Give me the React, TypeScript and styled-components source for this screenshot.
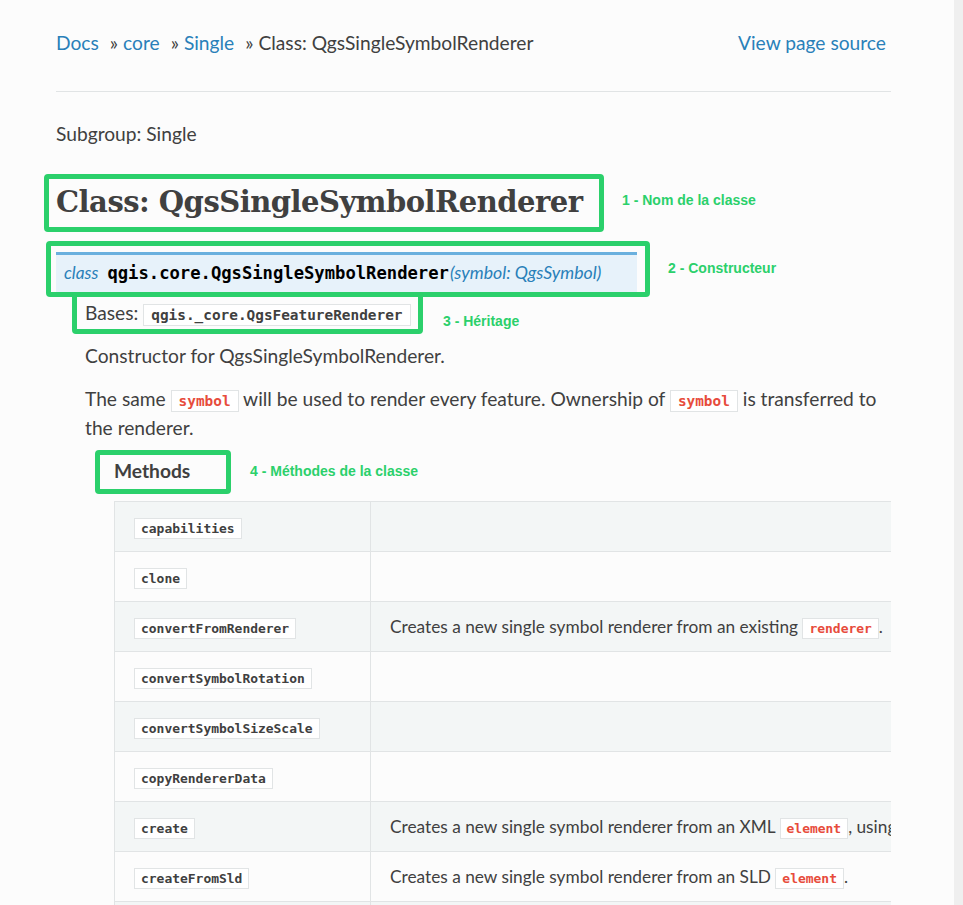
import React from "react";
import styled, { createGlobalStyle } from "styled-components";

const GlobalStyle = createGlobalStyle`
  html, body {
    margin: 0;
    padding: 0;
    background: #fcfcfc;
    overflow: hidden;
  }
  body {
    font-family: Lato, "Noto Sans", sans-serif;
    color: #404040;
  }
`;

const GREEN = "#2bd06b";
const BLUE = "#2980b9";

const Page = styled.div`
  position: relative;
  display: flex;
  width: 963px;
  height: 905px;
  overflow: hidden;
  background: #fcfcfc;
`;

const Main = styled.main`
  width: 835px;
  padding: 0 63px 0 56px;
  flex: none;
`;

const Gutter = styled.div`
  flex: 1;
  background: #efefef;
`;

const Breadcrumbs = styled.nav`
  margin-top: 28px;
  display: flex;
  justify-content: space-between;
  align-items: baseline;
  font-size: 19.2px;
  line-height: 29px;
  padding-right: 5px;
`;

const Trail = styled.div`
  display: flex;
  align-items: baseline;
`;

const CrumbLink = styled.a`
  color: ${BLUE};
  text-decoration: none;
`;

const Sep = styled.span`
  margin: 0 5px 0 11px;
  color: #404040;
`;

const Current = styled.span`
  color: #404040;
`;

const Rule = styled.hr`
  margin: 34px 0 0 0;
  border: none;
  border-top: 1px solid #e1e4e5;
  height: 0;
`;

const Para = styled.p<{ $top?: number }>`
  margin: ${(p) => p.$top ?? 14}px 0 0 0;
  font-size: 19.2px;
  line-height: 29px;
  color: #404040;
`;

const Title = styled.h1`
  margin: 36px 0 0 0;
  font-family: "DejaVu Serif", "Liberation Serif", serif;
  font-weight: 700;
  font-size: 29px;
  line-height: 36px;
  letter-spacing: -0.5px;
  color: #404040;
`;

const Signature = styled.div`
  margin-top: 32px;
  width: fit-content;
  display: flex;
  align-items: baseline;
  background: #e7f2fa;
  border-top: 3px solid #6ab0de;
  padding: 6px 36px 7px 8px;
  line-height: 24px;
`;

const SigKeyword = styled.em`
  font-style: italic;
  font-size: 17.3px;
  color: ${BLUE};
  margin-right: 9px;
`;

const SigName = styled.span`
  font-family: "DejaVu Sans Mono", monospace;
  font-weight: 700;
  font-size: 17.2px;
  color: #000;
`;

const SigParams = styled.em`
  font-style: italic;
  font-size: 17.7px;
  color: ${BLUE};
  margin-left: 1px;
`;

const Body = styled.div`
  margin-left: 29px;
  padding-top: 6px;
`;

const Code = styled.code<{ $red?: boolean; $size?: number }>`
  font-family: "DejaVu Sans Mono", monospace;
  font-weight: 700;
  font-size: ${(p) => p.$size ?? 14.4}px;
  line-height: ${(p) => (p.$size ?? 14.4) + 3}px;
  color: ${(p) => (p.$red ? "#e74c3c" : "#404040")};
  background: #fff;
  border: 1px solid #e1e4e5;
  padding: 2px ${(p) => ((p.$size ?? 14.4) > 14 ? 7 : 6)}px;
  white-space: nowrap;
`;

const Nested = styled.div`
  margin-left: 29px;
`;

const Rubric = styled.p`
  margin: 14px 0 0 0;
  font-size: 19.2px;
  font-weight: 700;
  line-height: 29px;
  color: #404040;
`;

const TableWrap = styled.div`
  margin-top: 16px;
  width: 777px;
  overflow: hidden;
`;

const Table = styled.table`
  width: max-content;
  border-collapse: collapse;
  border: 1px solid #e1e4e5;
  white-space: nowrap;
  font-size: 17.28px;
  color: #404040;
`;

const Row = styled.tr<{ $odd: boolean }>`
  height: 50px;
  background: ${(p) => (p.$odd ? "#f3f6f6" : "#fcfcfc")};
`;

const NameCell = styled.td`
  width: 216px;
  min-width: 216px;
  padding: 0 20px 0 19px;
  border: 1px solid #e1e4e5;
  vertical-align: middle;
`;

const DescCell = styled.td`
  width: 700px;
  padding: 0 19px;
  border: 1px solid #e1e4e5;
  vertical-align: middle;
  line-height: 24px;
`;

const Outline = styled.div<{ $x: number; $y: number; $w: number; $h: number }>`
  position: absolute;
  left: ${(p) => p.$x}px;
  top: ${(p) => p.$y}px;
  width: ${(p) => p.$w}px;
  height: ${(p) => p.$h}px;
  box-sizing: border-box;
  border: 5px solid ${GREEN};
  border-radius: 4px;
  pointer-events: none;
`;

const Label = styled.span<{ $x: number; $y: number }>`
  position: absolute;
  left: ${(p) => p.$x}px;
  top: ${(p) => p.$y - 8}px;
  font-family: "Liberation Sans", Arial, sans-serif;
  font-weight: 700;
  font-size: 14px;
  line-height: 17px;
  color: ${GREEN};
  white-space: nowrap;
`;

type Method = { name: string; desc?: React.ReactNode };

const methods: Method[] = [
  { name: "capabilities" },
  { name: "clone" },
  {
    name: "convertFromRenderer",
    desc: (
      <>
        Creates a new single symbol renderer from an existing <Code $red $size={12.96}>renderer</Code>.
      </>
    ),
  },
  { name: "convertSymbolRotation" },
  { name: "convertSymbolSizeScale" },
  { name: "copyRendererData" },
  {
    name: "create",
    desc: (
      <>
        Creates a new single symbol renderer from an XML <Code $red $size={12.96}>element</Code>, using the
        supplied read write context.
      </>
    ),
  },
  {
    name: "createFromSld",
    desc: (
      <>
        Creates a new single symbol renderer from an SLD <Code $red $size={12.96}>element</Code>.
      </>
    ),
  },
  {
    name: "dataDefinedSizeLegend",
    desc: <>Returns the symbol renderer's data defined size legend.</>,
  },
];

const callouts = [
  { box: { x: 44, y: 174, w: 560, h: 58 }, label: { x: 622, y: 200 }, text: "1 - Nom de la classe" },
  { box: { x: 46, y: 241, w: 604, h: 56 }, label: { x: 668, y: 268 }, text: "2 - Constructeur" },
  { box: { x: 72, y: 292, w: 351, h: 42 }, label: { x: 443, y: 321 }, text: "3 - Héritage" },
  { box: { x: 95, y: 450, w: 136, h: 44 }, label: { x: 250, y: 471 }, text: "4 - Méthodes de la classe" },
];

export default function App() {
  return (
    <>
      <GlobalStyle />
      <Page>
        <Main>
          <Breadcrumbs>
            <Trail>
              <CrumbLink href="#">Docs</CrumbLink>
              <Sep>»</Sep>
              <CrumbLink href="#">core</CrumbLink>
              <Sep>»</Sep>
              <CrumbLink href="#">Single</CrumbLink>
              <Sep>»</Sep>
              <Current>Class: QgsSingleSymbolRenderer</Current>
            </Trail>
            <CrumbLink href="#">View page source</CrumbLink>
          </Breadcrumbs>
          <Rule />
          <Para $top={27}>Subgroup: Single</Para>
          <Title>Class: QgsSingleSymbolRenderer</Title>
          <Signature>
            <SigKeyword>class</SigKeyword>
            <SigName>qgis.core.QgsSingleSymbolRenderer</SigName>
            <SigParams>(symbol: QgsSymbol)</SigParams>
          </Signature>
          <Body>
            <Para $top={0}>
              Bases: <Code>qgis._core.QgsFeatureRenderer</Code>
            </Para>
            <Para>Constructor for QgsSingleSymbolRenderer.</Para>
            <Para>
              The same <Code $red>symbol</Code> will be used to render every feature. Ownership of{" "}
              <Code $red>symbol</Code> is transferred to the renderer.
            </Para>
            <Nested>
              <Rubric>Methods</Rubric>
              <TableWrap>
                <Table>
                  <tbody>
                    {methods.map((m, i) => (
                      <Row key={m.name} $odd={i % 2 === 0}>
                        <NameCell>
                          <Code $size={12.96}>{m.name}</Code>
                        </NameCell>
                        <DescCell>{m.desc}</DescCell>
                      </Row>
                    ))}
                  </tbody>
                </Table>
              </TableWrap>
            </Nested>
          </Body>
        </Main>
        <Gutter />
        {callouts.map((c) => (
          <React.Fragment key={c.text}>
            <Outline $x={c.box.x} $y={c.box.y} $w={c.box.w} $h={c.box.h} />
            <Label $x={c.label.x} $y={c.label.y}>
              {c.text}
            </Label>
          </React.Fragment>
        ))}
      </Page>
    </>
  );
}
